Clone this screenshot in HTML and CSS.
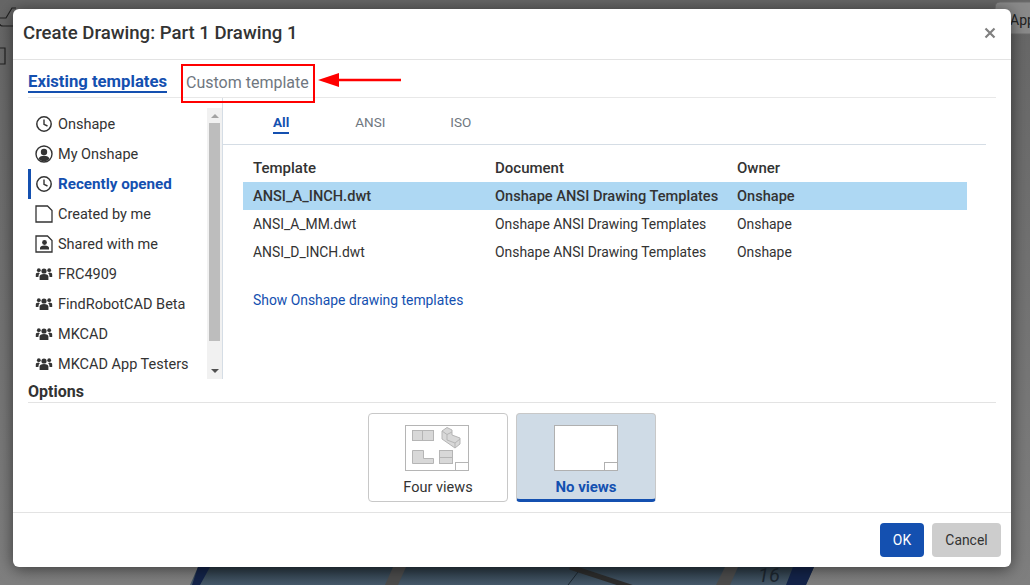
FILE: index.html
```html
<!DOCTYPE html>
<html lang="en">
<head>
    <meta charset="UTF-8">
    <meta name="viewport" content="width=device-width, initial-scale=1.0">
    <title>Create Drawing</title>
    <link rel="stylesheet" href="styles.css">
</head>
<body>
    <svg class="backdrop" width="1030" height="585" viewBox="0 0 1030 585">
        <path d="M0 18 H6 L12 8 H16 M16 26 H3 Q0 26 0 24" fill="none" stroke="#222" stroke-width="1.2"/>
        <path d="M0 48 H5 V64 H0" fill="none" stroke="#222" stroke-width="1.2"/>
        <path d="M1030 2 H1000 Q995 2 995 8 V34 H1030" fill="#8a8a8a" stroke="#6c6c6c"/>
        <text x="1010" y="25" class="backdrop-text">App</text>
        <defs>
            <linearGradient id="panel" x1="0" y1="0" x2="0" y2="1">
                <stop offset="0" stop-color="#2c3a45"/>
                <stop offset="1" stop-color="#46596a"/>
            </linearGradient>
        </defs>
        <path d="M198 567 L190 585 H806 L814 567 Z" fill="url(#panel)"/>
        <path d="M198 567 L192 585 H200 L210 567 Z M793 567 L786 585 H806 L814 567 H793 Z" fill="#14244a"/>
        <path d="M393 567 L385 585 H398 L406 567 Z M725 567 L716 585 H730 L738 567 Z" fill="#4c4c4c"/>
        <path d="M570 567 L640 590" stroke="#2d2d2d" stroke-width="5"/>
        <path d="M578 572 L568 585" stroke="#1c2730" stroke-width="1"/>
        <text x="758" y="582" class="backdrop-num">16</text>
    </svg>

    <div class="dialog">
        <div class="dialog-header">
            <h1>Create Drawing: Part 1 Drawing 1</h1>
            <svg class="close-icon" width="12" height="12" viewBox="0 0 12 12"><path d="M1.5 1.5 L10.5 10.5 M10.5 1.5 L1.5 10.5" stroke="#808080" stroke-width="2.2"/></svg>
        </div>

        <div class="tabs">
            <span class="tab active">Existing templates</span>
            <span class="tab">Custom template</span>
        </div>

        <div class="browser">
            <div class="sidebar">
                <ul class="nav-list">
                    <li><svg width="18" height="18" viewBox="0 0 18 18"><circle cx="9" cy="9" r="7.2" fill="none" stroke="#333" stroke-width="1.5"/><path d="M9 4.5 V9.4 L12.5 11" fill="none" stroke="#333" stroke-width="1.4"/></svg>Onshape</li>
                    <li><svg width="18" height="18" viewBox="0 0 18 18"><circle cx="9" cy="9" r="8" fill="none" stroke="#333" stroke-width="1.4"/><circle cx="9" cy="7" r="3.2" fill="#333"/><path d="M3.5 14 Q4.5 10.8 9 10.8 Q13.5 10.8 14.5 14 Q12 16.4 9 16.4 Q6 16.4 3.5 14 Z" fill="#333"/></svg>My Onshape</li>
                    <li class="current"><svg width="18" height="18" viewBox="0 0 18 18"><circle cx="9" cy="9" r="7.2" fill="none" stroke="#333" stroke-width="1.5"/><path d="M9 4.5 V9.4 L12.5 11" fill="none" stroke="#333" stroke-width="1.4"/></svg>Recently opened</li>
                    <li><svg width="18" height="18" viewBox="0 0 18 18"><path d="M1 1 H12.5 L17 5.5 V17 H1 Z" fill="none" stroke="#333" stroke-width="1.3"/></svg>Created by me</li>
                    <li><svg width="18" height="18" viewBox="0 0 18 18"><path d="M1 1 H12.5 L17 5.5 V17 H1 Z" fill="none" stroke="#333" stroke-width="1.3"/><circle cx="9.5" cy="7.5" r="2.4" fill="#333"/><path d="M5 14.5 V13 Q5 10.5 9.5 10.5 Q14 10.5 14 13 V14.5 Z" fill="#333"/></svg>Shared with me</li>
                    <li><svg class="team" width="18" height="18" viewBox="0 0 18 18"><use href="#team"/></svg>FRC4909</li>
                    <li><svg class="team" width="18" height="18" viewBox="0 0 18 18"><use href="#team"/></svg>FindRobotCAD Beta</li>
                    <li><svg class="team" width="18" height="18" viewBox="0 0 18 18"><use href="#team"/></svg>MKCAD</li>
                    <li><svg class="team" width="18" height="18" viewBox="0 0 18 18"><use href="#team"/></svg>MKCAD App Testers</li>
                </ul>
                <div class="scrollbar">
                    <span class="arrow-up"></span>
                    <div class="scroll-track"><div class="scroll-thumb"></div></div>
                    <span class="arrow-down"></span>
                </div>
            </div>

            <div class="content">
                <div class="filters">
                    <span class="filter active">All</span>
                    <span class="filter">ANSI</span>
                    <span class="filter">ISO</span>
                </div>
                <div class="table">
                    <div class="row head"><span>Template</span><span>Document</span><span>Owner</span></div>
                    <div class="row selected"><span>ANSI_A_INCH.dwt</span><span>Onshape ANSI Drawing Templates</span><span>Onshape</span></div>
                    <div class="row"><span>ANSI_A_MM.dwt</span><span>Onshape ANSI Drawing Templates</span><span>Onshape</span></div>
                    <div class="row"><span>ANSI_D_INCH.dwt</span><span>Onshape ANSI Drawing Templates</span><span>Onshape</span></div>
                </div>
                <a class="show-link">Show Onshape drawing templates</a>
            </div>
        </div>

        <div class="options">
            <h2>Options</h2>
            <div class="cards">
                <div class="card">
                    <svg width="64" height="46" viewBox="0 0 64 46">
                        <rect x="0.5" y="0.5" width="63" height="45" fill="#fff" stroke="#b5b5b5"/>
                        <rect x="7.5" y="5.5" width="21" height="10" fill="#d8d8d8" stroke="#b5b5b5"/>
                        <path d="M17.5 5.5 V15.5" stroke="#b5b5b5"/>
                        <path d="M37 6 L42 2.5 L47 5 V10 L55 13 V19 L50 23 L37 14 Z" fill="#d8d8d8" stroke="#b5b5b5"/>
                        <path d="M37 6 L42 9.5 L47 7 M42 9.5 V15 L50 18 L55 14 M50 18 V23" fill="none" stroke="#b5b5b5"/>
                        <path d="M7.5 25.5 H18.5 V33.5 H28.5 V38.5 H7.5 Z" fill="#d8d8d8" stroke="#b5b5b5"/>
                        <rect x="34.5" y="25.5" width="13" height="13" fill="#d8d8d8" stroke="#b5b5b5"/>
                        <path d="M34.5 32.5 H47.5" stroke="#b5b5b5"/>
                        <rect x="50.5" y="37.5" width="13" height="8" fill="#fff" stroke="#b5b5b5"/>
                    </svg>
                    <span>Four views</span>
                </div>
                <div class="card selected">
                    <svg width="64" height="46" viewBox="0 0 64 46">
                        <rect x="0.5" y="0.5" width="63" height="45" fill="#fff" stroke="#b0b0b0"/>
                        <rect x="50.5" y="37.5" width="13" height="8" fill="#fff" stroke="#b0b0b0"/>
                    </svg>
                    <span>No views</span>
                </div>
            </div>
        </div>

        <div class="dialog-footer">
            <button class="btn primary">OK</button>
            <button class="btn">Cancel</button>
        </div>
    </div>

    <!-- red callout added on the screenshot -->
    <div class="callout-box"></div>
    <svg class="callout-arrow" width="84" height="16" viewBox="0 0 84 16"><path d="M0 8 L21 1 V6.8 H83 V9.2 H21 V15 Z" fill="#f00"/></svg>

    <svg width="0" height="0" class="defs">
        <defs>
            <g id="team" fill="#333">
                <circle cx="9" cy="6" r="2.6"/>
                <circle cx="3.8" cy="5.2" r="1.9"/>
                <circle cx="14.2" cy="5.2" r="1.9"/>
                <path d="M4.6 15 V11.5 Q4.6 9 9 9 Q13.4 9 13.4 11.5 V15 Z"/>
                <path d="M0.8 12 V9.5 Q0.8 7.6 3.8 7.6 L4.8 8.2 Q3.4 9.4 3.4 12 Z"/>
                <path d="M17.2 12 V9.5 Q17.2 7.6 14.2 7.6 L13.2 8.2 Q14.6 9.4 14.6 12 Z"/>
            </g>
        </defs>
    </svg>
</body>
</html>
```

FILE: styles.css
```css
* {
    box-sizing: border-box;
}

html, body {
    height: 100%;
}

body {
    margin: 0;
    padding: 9px 19px 18px 13px;
    position: relative;
    overflow: hidden;
    background: linear-gradient(180deg, #666 0%, #7f7f7f 100%);
    font-family: "Roboto", "Liberation Sans", sans-serif;
    font-size: 14.5px;
    color: #333;
}

.backdrop {
    position: absolute;
    top: 0;
    left: 0;
}

.backdrop-text {
    font-size: 14px;
    fill: #222;
}

.backdrop-num {
    font-size: 20px;
    fill: #1d2730;
    font-style: italic;
}

.defs {
    position: absolute;
}

.dialog {
    position: relative;
    height: 558px;
    display: flex;
    flex-direction: column;
    background: #fff;
    border-radius: 6px;
    box-shadow: 0 2px 16px rgba(0, 0, 0, 0.55);
}

/* Header */
.dialog-header {
    height: 51px;
    flex: none;
    display: flex;
    align-items: center;
    justify-content: space-between;
    padding: 0 15px 2px 10px;
    border-bottom: 1px solid #e3e3e3;
}

.dialog-header h1 {
    margin: 0;
    font-size: 18.6px;
    font-weight: 500;
    color: #333;
}

/* Top tabs */
.tabs {
    height: 38px;
    flex: none;
    margin: 0 15px;
    display: flex;
    align-items: center;
    gap: 19px;
    border-bottom: 1px solid #e8e8e8;
}

.tab {
    font-size: 16px;
    color: #6f7780;
    padding-top: 7px;
}

.tab.active {
    font-size: 16.7px;
    font-weight: 700;
    color: #1450b0;
    border-bottom: 2px solid #1450b0;
    padding-top: 7px;
}

/* Browser area */
.browser {
    height: 281px;
    flex: none;
    margin-left: 15px;
    display: flex;
}

.sidebar {
    width: 195px;
    flex: none;
    display: flex;
    border-right: 1px solid #d5dde5;
}

.nav-list {
    list-style: none;
    margin: 11px 0 0;
    padding: 0;
    flex: 1;
}

.nav-list li {
    height: 30px;
    display: flex;
    align-items: center;
    gap: 5px;
    padding-left: 7px;
    white-space: nowrap;
}

.nav-list li svg {
    flex: none;
}

.nav-list li.current {
    font-size: 15.2px;
    font-weight: 700;
    color: #1450b0;
    box-shadow: inset 3px 0 0 #1450b0;
}

.scrollbar {
    width: 15px;
    flex: none;
    margin-top: 10px;
    display: flex;
    flex-direction: column;
    align-items: center;
    background: #f1f1f1;
}

.arrow-up,
.arrow-down {
    width: 0;
    height: 0;
    flex: none;
    margin: 6px 0;
    border-left: 4px solid transparent;
    border-right: 4px solid transparent;
}

.arrow-up {
    margin-bottom: 5px;
    border-bottom: 4px solid #a3a3a3;
}

.arrow-down {
    border-top: 4px solid #505050;
}

.scroll-track {
    flex: 1;
    width: 100%;
}

.scroll-thumb {
    height: 218px;
    margin-left: 2px;
    width: 11px;
    background: #bdbdbd;
}

.content {
    flex: 1;
    min-width: 0;
}

.filters {
    height: 47px;
    margin-right: 25px;
    display: flex;
    align-items: center;
    padding: 6px 0 0 50px;
    border-bottom: 1px solid #d5dde5;
}

.filter {
    font-size: 13.5px;
    color: #6f7780;
    margin-right: 65px;
    padding-bottom: 2px;
    margin-top: -2px;
}

.filter.active {
    margin-right: 66px;
    font-weight: 700;
    color: #1450b0;
    border-bottom: 2px solid #1450b0;
    margin-top: 0;
}

.table {
    margin: 9px 44px 0 20px;
}

.row {
    height: 28px;
    display: grid;
    grid-template-columns: 242px 242px 1fr;
    align-items: center;
    padding-left: 10px;
    font-size: 13.9px;
}

.row.head {
    font-size: 15px;
    font-weight: 500;
}

.row.selected {
    background: #aed8f3;
    font-size: 14.6px;
    font-weight: 500;
}

.show-link {
    display: block;
    margin: 26px 0 0 30px;
    font-size: 13.9px;
    color: #1450b0;
}

/* Options */
.options {
    margin: 0 15px;
    flex: none;
}

.options h2 {
    margin: 0;
    height: 24px;
    line-height: 26px;
    font-size: 16px;
    font-weight: 700;
    color: #333;
    border-bottom: 1px solid #e3e3e3;
}

.cards {
    margin-top: 10px;
    display: flex;
    justify-content: center;
    gap: 8px;
}

.card {
    width: 140px;
    height: 89px;
    display: flex;
    flex-direction: column;
    align-items: center;
    padding-top: 11px;
    gap: 8px;
    background: #fff;
    border: 1px solid #c8c8c8;
    border-radius: 4px;
}

.card svg {
    margin-right: 2px;
}

.card.selected {
    background: #cfdbe6;
    color: #1450b0;
    font-size: 15px;
    font-weight: 700;
    gap: 7px;
    border-bottom: 3px solid #1450b0;
}

.card.selected svg {
    margin-right: 0;
}

/* Footer */
.dialog-footer {
    margin-top: 10px;
    flex: 1;
    display: flex;
    justify-content: flex-end;
    align-items: flex-start;
    gap: 8px;
    padding: 10px 10px 0 0;
    border-top: 1px solid #e3e3e3;
}

.btn {
    width: 69px;
    height: 34px;
    padding: 0;
    border: none;
    border-radius: 4px;
    background: #cdcdcd;
    color: #333;
    font-family: inherit;
    font-size: 13.9px;
}

.btn.primary {
    width: 44px;
    background: #1450b0;
    color: #fff;
}

/* Callout */
.callout-box {
    position: absolute;
    left: 181px;
    top: 64px;
    width: 134px;
    height: 39px;
    border: 2px solid #f00;
}

.callout-arrow {
    position: absolute;
    left: 318px;
    top: 72px;
}
```
